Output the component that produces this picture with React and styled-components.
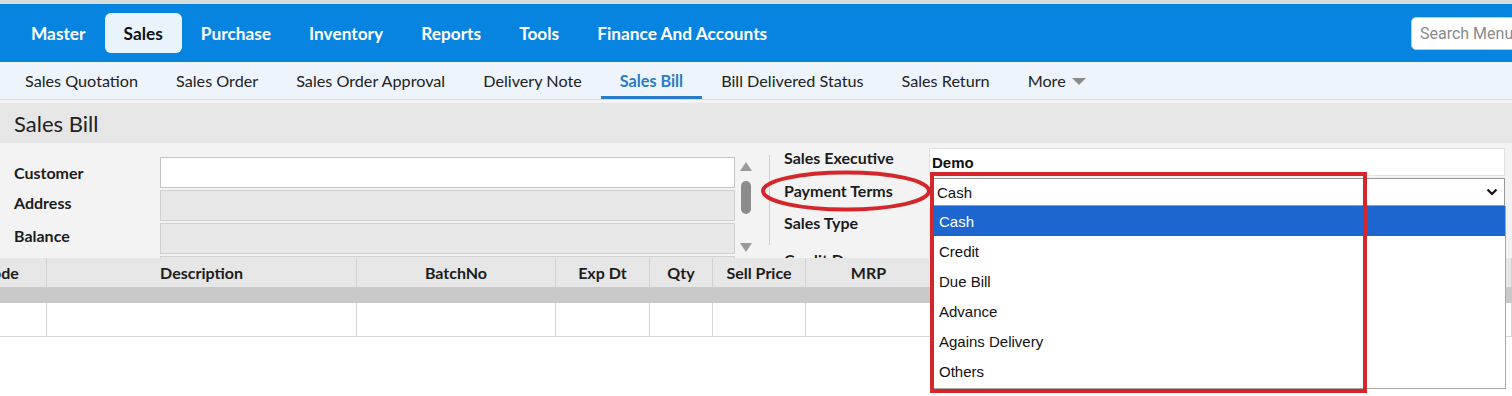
import { useLayoutEffect, useRef } from "react";
import styled, { createGlobalStyle } from "styled-components";

const GlobalStyle = createGlobalStyle`
  html, body { margin: 0; padding: 0; background: #fff; }
  body { font-family: Lato, "Open Sans", sans-serif; color: #222; overflow: hidden; }
  * { box-sizing: border-box; }
`;

const Page = styled.div`
  position: relative;
  width: 1512px;
  height: 396px;
  overflow: hidden;
`;

const TopStrip = styled.div`
  height: 4px;
  background: #dcdcdc;
`;

// top blue menu
const MainNav = styled.nav`
  display: flex;
  align-items: center;
  height: 58px;
  padding-left: 12px;
  background: #0784e0;
  overflow: hidden;
`;

const NavItem = styled.a`
  display: flex;
  align-items: center;
  flex-shrink: 0;
  height: 40px;
  padding: 0 19px;
  border-radius: 6px;
  font-size: 17.3px;
  font-weight: 700;
  color: ${(p) => (p.$active ? "#111" : "#fff")};
  background: ${(p) => (p.$active ? "#e9f3fc" : "transparent")};
`;

const Search = styled.input`
  flex-shrink: 0;
  margin-left: auto;
  margin-right: -32px;
  width: 133px;
  height: 33px;
  padding: 0 8px;
  border: 1px solid #c9c9c9;
  border-radius: 5px;
  font-family: Roboto, sans-serif;
  font-size: 16px;
  &::placeholder { color: #8a8a8a; }
`;

// second level menu
const SubNav = styled.nav`
  display: flex;
  height: 38px;
  padding-left: 6px;
  background: #edf4fb;
  border-bottom: 1px solid #d3dbe3;
`;

const SubItem = styled.a`
  display: flex;
  align-items: center;
  gap: 6px;
  padding: 3px 19px 0;
  font-size: 16.2px;
  font-weight: ${(p) => (p.$active ? 700 : 400)};
  color: ${(p) => (p.$active ? "#2b7cc6" : "#222")};
  border-bottom: 3px solid ${(p) => (p.$active ? "#2b7cc6" : "transparent")};
`;

const Caret = styled.span`
  width: 0;
  height: 0;
  border-left: 7px solid transparent;
  border-right: 7px solid transparent;
  border-top: 7px solid #8c8c8c;
  margin-top: 2px;
`;

const Content = styled.div`
  padding-top: 3px;
  background: #f4f4f4;
`;

const TitleBar = styled.h2`
  display: flex;
  align-items: center;
  height: 40px;
  margin: 0;
  padding-left: 14px;
  background: #e6e6e6;
  font-size: 22px;
  font-weight: 400;
  color: #222;
`;

const Form = styled.div`
  display: flex;
  height: 115px;
  overflow: hidden;
  background: #f3f3f3;
`;

const FieldGrid = styled.div`
  display: grid;
  grid-template-columns: ${(p) => p.$cols};
  grid-auto-rows: ${(p) => p.$row}px;
  row-gap: 2px;
  padding: ${(p) => p.$pad};
  align-items: center;
`;

const Label = styled.label`
  font-size: 16px;
  font-weight: 700;
  color: #1c1c1c;
  white-space: nowrap;
  padding-bottom: ${(p) => p.$lift || 0}px;
  padding-top: ${(p) => p.$drop || 0}px;
  align-self: ${(p) => (p.$top ? "start" : "center")};
`;

const Input = styled.div`
  height: 100%;
  border: 1px solid ${(p) => (p.$readonly ? "#cfcfcf" : "#c5c5c5")};
  background: ${(p) => (p.$readonly ? "#e8e8e8" : "#fff")};
`;

const ValueBox = styled.div`
  display: flex;
  align-items: center;
  height: 100%;
  padding: 0 2px;
  background: #fff;
  border: 1px solid #e0e0e0;
  font-family: "Liberation Sans", Arial, sans-serif;
  font-size: 15px;
  font-weight: ${(p) => (p.$bold ? 700 : 400)};
  color: #111;
`;

const SelectBox = styled(ValueBox)`
  justify-content: space-between;
  padding: 0 6px 0 5px;
  margin-left: 2px;
  border-color: #9a9a9a;
`;

const ScrollTrack = styled.div`
  display: flex;
  flex-direction: column;
  align-items: center;
  width: 12px;
  margin: 16px 0 0 5px;
  height: 95px;
`;

const Arrow = styled.span`
  width: 0;
  height: 0;
  border-left: 6px solid transparent;
  border-right: 6px solid transparent;
  ${(p) => (p.$down ? "border-top" : "border-bottom")}: 9px solid #9a9a9a;
  margin-top: ${(p) => (p.$down ? "auto" : "3px")};
  margin-bottom: ${(p) => (p.$down ? "2px" : "0")};
`;

const Thumb = styled.span`
  width: 10px;
  height: 33px;
  margin-top: 10px;
  border-radius: 5px;
  background: #8c8c8c;
`;

const Divider = styled.div`
  width: 1px;
  height: 90px;
  margin: 12px 0 0 17px;
  background: #d0d0d0;
`;

// item grid
const TableWrap = styled.div`
  background: #fff;
  overflow-x: auto;
  scrollbar-width: none;
  &::-webkit-scrollbar { display: none; }
`;

const Table = styled.table`
  border-collapse: collapse;
  table-layout: fixed;
`;

const Th = styled.th`
  height: 29px;
  padding: 0;
  background: #e6e6e6;
  border-right: 1px solid #d2d2d2;
  font-size: 16px;
  font-weight: 700;
  color: #1c1c1c;
  text-align: center;
  white-space: nowrap;
`;

const GapRow = styled.td`
  height: 16px;
  padding: 0;
  background: #c9c9c9;
`;

const Td = styled.td`
  height: 33px;
  padding: 0;
  border: 1px solid #d6d6d6;
  border-top: none;
`;

// open select list
const Menu = styled.ul`
  position: absolute;
  left: 932px;
  top: 206px;
  width: 574px;
  margin: 0;
  padding: 0 0 2px;
  list-style: none;
  background: #fff;
  border: 1px solid #a8a8a8;
  border-top: none;
  font-family: "Liberation Sans", Arial, sans-serif;
  font-size: 15px;
  z-index: 5;
`;

const MenuItem = styled.li`
  display: flex;
  align-items: center;
  height: 30px;
  padding-left: 6px;
  color: ${(p) => (p.$selected ? "#fff" : "#111")};
  background: ${(p) => (p.$selected ? "#1d66cf" : "transparent")};
`;

// red annotations over the screenshot
const MarkBox = styled.div`
  position: absolute;
  left: 930px;
  top: 172px;
  width: 437px;
  height: 221px;
  border: 4px solid #d3272b;
  z-index: 6;
`;

const MarkRing = styled.svg`
  position: absolute;
  left: 760px;
  top: 170px;
  z-index: 6;
`;

const mainMenu = ["Master", "Sales", "Purchase", "Inventory", "Reports", "Tools", "Finance And Accounts"];
const subMenu = ["Sales Quotation", "Sales Order", "Sales Order Approval", "Delivery Note", "Sales Bill", "Bill Delivered Status", "Sales Return"];
const columns = [
  ["Code", 92], ["Description", 310], ["BatchNo", 199], ["Exp Dt", 94], ["Qty", 63],
  ["Sell Price", 93], ["MRP", 126], ["Disc %", 100], ["Tax %", 100], ["Net Rate", 120],
  ["Amount", 140], ["Stock :", 120], ["Unit", 143],
];
const tableWidth = columns.reduce((s, [, w]) => s + w, 0);
const terms = ["Cash", "Credit", "Due Bill", "Advance", "Agains Delivery", "Others"];

export default function App() {
  const wrapRef = useRef(null);

  useLayoutEffect(() => {
    if (wrapRef.current) wrapRef.current.scrollLeft = 46;
  }, []);

  return (
    <Page>
      <GlobalStyle />
      <TopStrip />
      <MainNav>
        {mainMenu.map((m) => (
          <NavItem key={m} $active={m === "Sales"}>{m}</NavItem>
        ))}
        <Search placeholder="Search Menu" />
      </MainNav>

      <SubNav>
        {subMenu.map((s) => (
          <SubItem key={s} $active={s === "Sales Bill"}>{s}</SubItem>
        ))}
        <SubItem>More <Caret /></SubItem>
      </SubNav>

      <Content>
        <TitleBar>Sales Bill</TitleBar>
        <Form>
          <FieldGrid $cols="146px 575px" $row={31} $pad="14px 0 0 14px">
            <Label>Customer</Label>
            <Input />
            <Label $lift={7}>Address</Label>
            <Input $readonly />
            <Label $lift={7}>Balance</Label>
            <Input $readonly />
            <Label />
            <Input $readonly />
          </FieldGrid>
          <ScrollTrack>
            <Arrow />
            <Thumb />
            <Arrow $down />
          </ScrollTrack>
          <Divider />
          <FieldGrid $cols="145px 576px" $row={28} $pad="5px 0 0 14px">
            <Label $top>Sales Executive</Label>
            <ValueBox $bold>Demo</ValueBox>
            <Label $lift={4}>Payment Terms</Label>
            <SelectBox>
              Cash
              <svg width="12" height="8" viewBox="0 0 12 8">
                <polyline points="1.5,1.5 6,6 10.5,1.5" fill="none" stroke="#111" strokeWidth="2.2" />
              </svg>
            </SelectBox>
            <Label>Sales Type</Label>
            <ValueBox />
            <Label $drop={15}>Credit Days</Label>
            <ValueBox />
          </FieldGrid>
        </Form>

        <TableWrap ref={wrapRef}>
          <Table style={{ width: tableWidth }}>
            <colgroup>
              {columns.map(([name, w]) => <col key={name} style={{ width: w }} />)}
            </colgroup>
            <thead>
              <tr>{columns.map(([name]) => <Th key={name}>{name}</Th>)}</tr>
            </thead>
            <tbody>
              <tr><GapRow colSpan={columns.length} /></tr>
              <tr>{columns.map(([name]) => <Td key={name} />)}</tr>
            </tbody>
          </Table>
        </TableWrap>
      </Content>

      <Menu>
        {terms.map((t, i) => (
          <MenuItem key={t} $selected={i === 0}>{t}</MenuItem>
        ))}
      </Menu>

      <MarkBox />
      <MarkRing width="174" height="44" viewBox="0 0 174 44">
        <ellipse cx="86" cy="21" rx="83" ry="18.5" fill="none" stroke="#d3272b" strokeWidth="4" />
      </MarkRing>
    </Page>
  );
}
